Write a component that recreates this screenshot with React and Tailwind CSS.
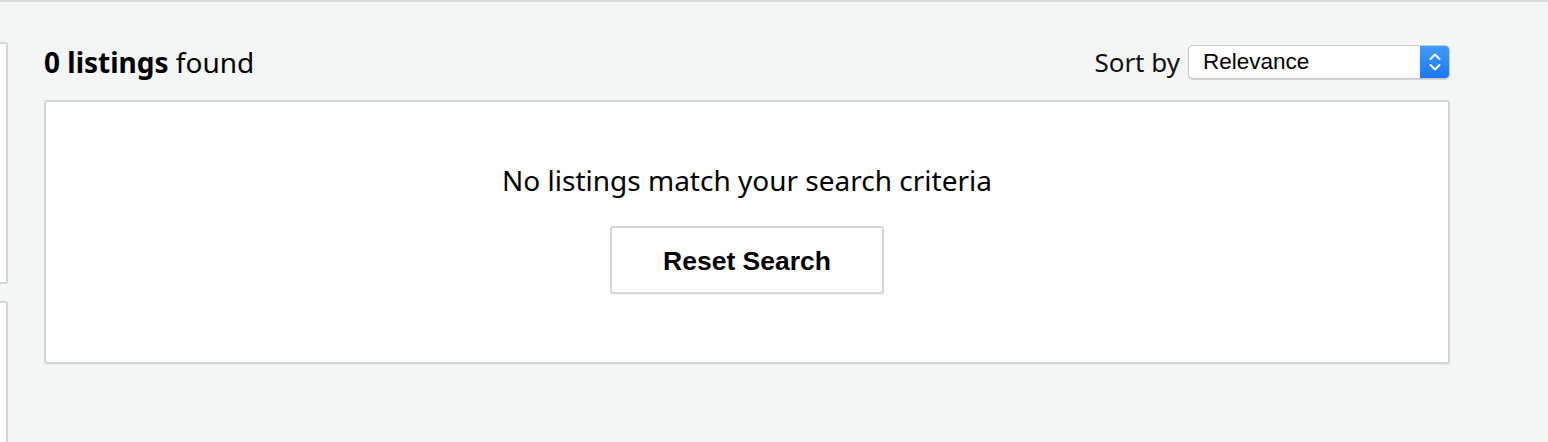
import React from "react";

export default function App() {
  return (
    <div className="w-[1548px] h-[442px] overflow-hidden bg-[#f4f5f5] border-t-2 border-[#d8dadc] flex" style={{ fontFamily: '"Noto Sans", "Open Sans", sans-serif' }}>
      <div className="w-[8px] shrink-0 flex flex-col pt-[40px] gap-[17px]">
        <div className="shrink-0 h-[242px] bg-white border-y-2 border-r-2 border-[#d4d5d8] rounded-r-[3px]" />
        <div className="shrink-0 h-[200px] bg-white border-t-2 border-r-2 border-[#d4d5d8] rounded-tr-[3px]" />
      </div>
      <div className="ml-[36px] w-[1406px] flex flex-col">
        <div className="h-[98px] flex items-center justify-between pt-[42px] pb-[20px]">
          <div className="text-[28px] text-black leading-none">
            <span className="font-bold">0 listings</span> found
          </div>
          <div className="flex items-center gap-[8px]">
            <span className="text-[26px] text-[#111] leading-none">Sort by</span>
            <div className="relative w-[262px] h-[34px] bg-white rounded-[5px] border border-[#c9c9cc] shadow-[0_1px_1px_rgba(0,0,0,0.15)] flex items-center overflow-hidden">
              <span className="pl-[14px] text-[22.5px] text-black leading-none" style={{ fontFamily: '"Liberation Sans", Arial, sans-serif' }}>Relevance</span>
              <div className="absolute right-0 top-0 bottom-0 w-[29px] bg-gradient-to-b from-[#3f9bff] to-[#1a76f5] flex items-center justify-center">
                <svg width="14" height="24" viewBox="0 0 14 24" fill="none" stroke="white" strokeWidth="2" strokeLinecap="round" strokeLinejoin="round">
                  <path d="M2.5 9 L7 4.5 L11.5 9" />
                  <path d="M2.5 15 L7 19.5 L11.5 15" />
                </svg>
              </div>
            </div>
          </div>
        </div>
        <div className="h-[264px] bg-white border-2 border-[#d4d5d8] rounded-[3px] shadow-[0_1px_1px_rgba(0,0,0,0.06)] flex flex-col items-center pt-[58px]">
          <div className="text-[28px] text-black leading-[40px]">No listings match your search criteria</div>
          <button className="mt-[26px] w-[274px] h-[68px] pt-[4px] bg-white border-2 border-[#d4d5d8] rounded-[3px] shadow-[0_1px_1px_rgba(0,0,0,0.06)] text-[26.5px] font-bold text-black" style={{ fontFamily: '"Liberation Sans", Arial, sans-serif' }}>
            Reset Search
          </button>
        </div>
      </div>
    </div>
  );
}
